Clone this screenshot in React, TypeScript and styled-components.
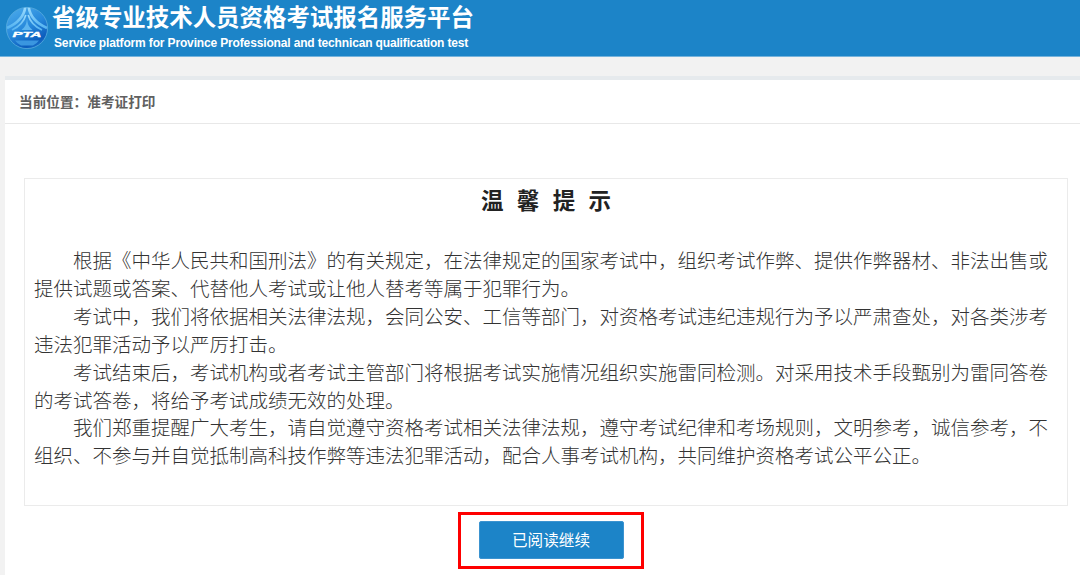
import React from 'react';
import styled, { createGlobalStyle } from 'styled-components';

const GlobalStyle = createGlobalStyle`
  * { box-sizing: border-box; }
  body {
    margin: 0;
    background: #f2f2f2;
    font-family: 'Liberation Sans', 'Noto Sans CJK SC', sans-serif;
    overflow: hidden;
  }
`;

const Page = styled.div`
  display: flex;
  flex-direction: column;
  height: 575px;
`;

const Header = styled.header`
  display: flex;
  height: 57px;
  flex: none;
  padding: 6px 0 0 5px;
  background: #1c84c8;
  border-bottom: 1px solid #75b3dc;
`;

const Logo = styled.svg`
  width: 44px;
  height: 44px;
  flex: none;
`;

const Titles = styled.div`
  margin: -4px 0 0 3px;
  color: #fff;
  white-space: nowrap;
`;

const SiteName = styled.h1`
  margin: 0;
  font: bold 23.45px/28px 'Noto Sans CJK SC', sans-serif;
`;

const SiteSubtitle = styled.div`
  margin-left: 2px;
  font-size: 12px;
  font-weight: bold;
  letter-spacing: -0.15px;
  line-height: 26px;
`;

const Panel = styled.main`
  flex: 1;
  margin: 19px 0 0 5px;
  background: #fff;
  border-top: 4px solid #e6eaed;
`;

const Breadcrumb = styled.div`
  height: 44px;
  padding-left: 14px;
  border-bottom: 1px solid #e8e8e8;
  color: #606060;
  font: 600 13.65px/43px 'Noto Sans CJK SC', sans-serif;
`;

const Notice = styled.section`
  height: 328px;
  margin: 54px 12px 0 19px;
  padding: 0 9px;
  border: 1px solid #ebebeb;
  color: #333;
  font-family: 'Noto Sans CJK SC', sans-serif;
`;

const NoticeTitle = styled.h2`
  margin: 3px 0 29px;
  color: #222;
  font-size: 22.5px;
  font-weight: bold;
  line-height: 35px;
  text-align: center;
  word-spacing: 8.3px;
`;

const Paragraph = styled.p`
  width: 1018px;
  margin: 0;
  font-size: 19.5px;
  font-weight: 300;
  line-height: 27.9px;
  text-indent: 2em;
  text-spacing-trim: space-all;
`;

const Actions = styled.div`
  display: flex;
  margin: 6px 0 0 453px;
`;

const Highlight = styled.div`
  padding: 6px 17px 7px 18px;
  border: 3px solid #fe0000;
`;

const ContinueButton = styled.button`
  display: block;
  width: 145px;
  height: 38px;
  padding: 0 1px 2px 0;
  border: 1px solid #3b93d0;
  border-radius: 2px;
  background: #1c84c8;
  color: #fff;
  font: 15.6px/34px 'Noto Sans CJK SC', sans-serif;
`;

const paragraphs = [
  '根据《中华人民共和国刑法》的有关规定,在法律规定的国家考试中,组织考试作弊、提供作弊器材、非法出售或提供试题或答案、代替他人考试或让他人替考等属于犯罪行为。',
  '考试中,我们将依据相关法律法规,会同公安、工信等部门,对资格考试违纪违规行为予以严肃查处,对各类涉考违法犯罪活动予以严厉打击。',
  '考试结束后,考试机构或者考试主管部门将根据考试实施情况组织实施雷同检测。对采用技术手段甄别为雷同答卷的考试答卷,将给予考试成绩无效的处理。',
  '我们郑重提醒广大考生,请自觉遵守资格考试相关法律法规,遵守考试纪律和考场规则,文明参考,诚信参考,不组织、不参与并自觉抵制高科技作弊等违法犯罪活动,配合人事考试机构,共同维护资格考试公平公正。',
].map((text) => text.replace(/,/g, '\uff0c'));

function PtaLogo() {
  return (
    <Logo viewBox="0 0 44 44" aria-hidden="true">
      <defs>
        <linearGradient id="globe" x1="0.2" y1="0" x2="0.75" y2="1">
          <stop offset="0" stopColor="#4aa9ea" />
          <stop offset="0.5" stopColor="#2587da" />
          <stop offset="0.85" stopColor="#0c5cbc" />
          <stop offset="1" stopColor="#1e78cd" />
        </linearGradient>
        <linearGradient id="arc" x1="0" y1="0" x2="0" y2="1">
          <stop offset="0" stopColor="#9bdafc" />
          <stop offset="1" stopColor="#55b4f1" />
        </linearGradient>
        <clipPath id="disc">
          <circle cx="22" cy="22" r="20.5" />
        </clipPath>
      </defs>
      <circle cx="22" cy="22" r="20.6" fill="url(#globe)" stroke="#58acde" strokeWidth="0.8" />
      <g clipPath="url(#disc)" fill="none" stroke="url(#arc)">
        <path d="M20.3 1 C19 11 12 17.5 2 22" strokeWidth="2.6" />
        <path d="M23.7 1 C25 11 32 17.5 42 22" strokeWidth="2.6" />
        <path d="M20.8 9 C18.5 17.5 13.5 21 7 24" strokeWidth="1.7" />
        <path d="M23.2 9 C25.5 17.5 30.5 21 37 24" strokeWidth="1.7" />
        <path d="M22 12 C21.7 18 20 21 16.5 24 H27.5 C24 21 22.3 18 22 12 Z" fill="#5db5ef" stroke="none" />
        <path d="M10 34.5 H34 Q32 37.5 28 39.5 H16 Q12 37.5 10 34.5 Z" fill="#3a96e0" stroke="none" />
      </g>
      <text
        x="7.5"
        y="30.5"
        fill="#fff"
        stroke="#fff"
        strokeWidth="0.35"
        fontFamily="Liberation Sans, sans-serif"
        fontSize="7.5"
        fontWeight="bold"
        fontStyle="italic"
        textLength="29"
        lengthAdjust="spacingAndGlyphs"
      >
        PTA
      </text>
    </Logo>
  );
}

export default function App() {
  return (
    <Page>
      <GlobalStyle />
      <Header>
        <PtaLogo />
        <Titles>
          <SiteName>省级专业技术人员资格考试报名服务平台</SiteName>
          <SiteSubtitle>Service platform for Province Professional and technican qualification test</SiteSubtitle>
        </Titles>
      </Header>
      <Panel>
        <Breadcrumb>当前位置{'\uff1a'}准考证打印</Breadcrumb>
        <Notice>
          <NoticeTitle>温 馨 提 示</NoticeTitle>
          {paragraphs.map((text) => (
            <Paragraph key={text}>{text}</Paragraph>
          ))}
        </Notice>
        <Actions>
          <Highlight>
            <ContinueButton type="button">已阅读继续</ContinueButton>
          </Highlight>
        </Actions>
      </Panel>
    </Page>
  );
}
